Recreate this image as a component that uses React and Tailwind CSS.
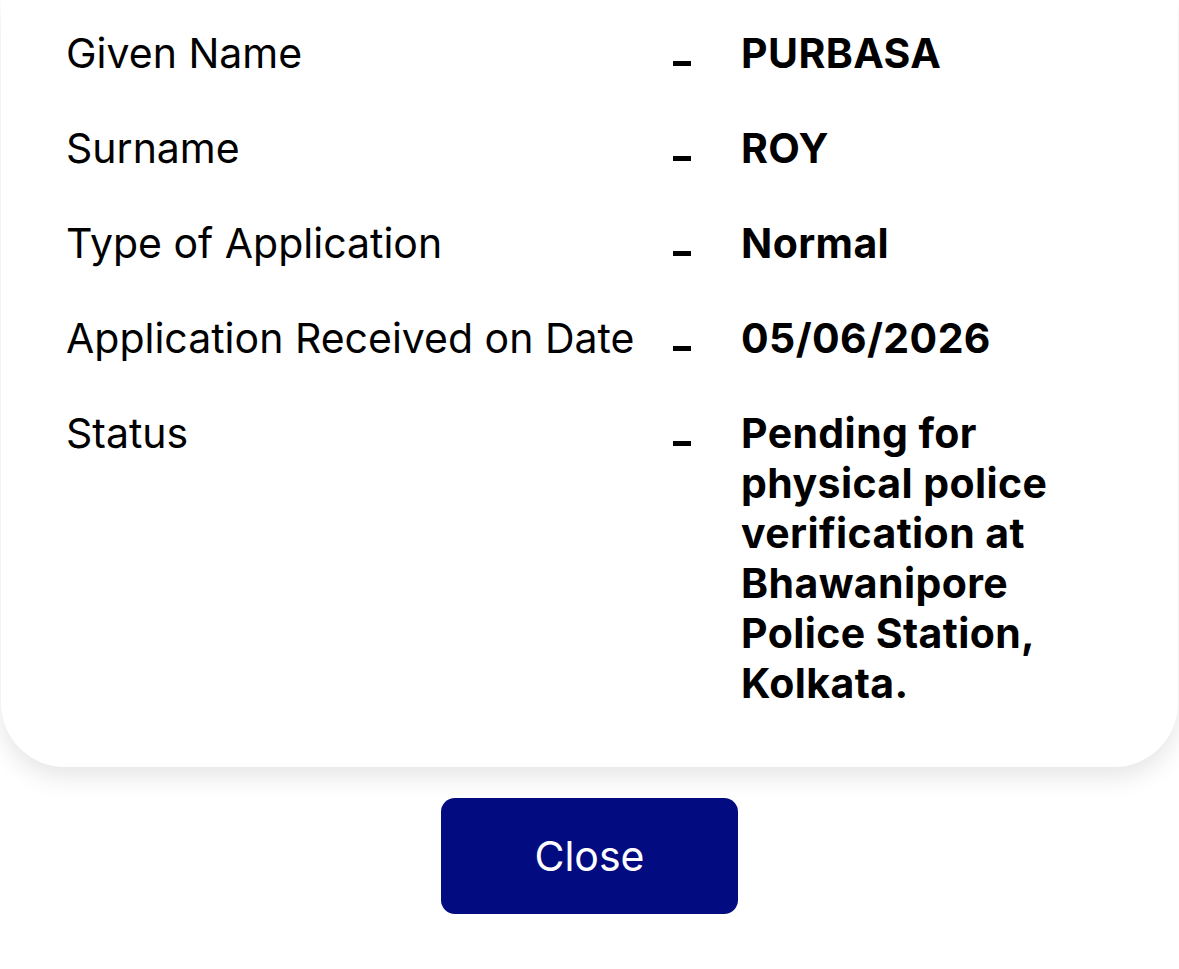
const rows = [
  { label: 'Given Name', value: 'PURBASA' },
  { label: 'Surname', value: 'ROY' },
  { label: 'Type of Application', value: 'Normal' },
  { label: 'Application Received on Date', value: '05/06/2026' },
  {
    label: 'Status',
    value: 'Pending for physical police verification at Bhawanipore Police Station, Kolkata.',
  },
]

function DetailRow({ label, value }) {
  return (
    <div className="flex items-start">
      <div className="w-[607px] shrink-0 text-[41px] leading-[50px] text-black">{label}</div>
      <div className="w-[68px] shrink-0 h-[50px] flex items-end pb-[12px]">
        <div className="w-[18px] h-[5px] bg-black" />
      </div>
      <div className="w-[325px] text-[41px] leading-[50px] font-bold tracking-[0.4px] text-black">{value}</div>
    </div>
  )
}

export default function App() {
  return (
    <div className="min-h-screen bg-white font-['Inter','Liberation_Sans',sans-serif] flex flex-col">
      <div className="mx-[1px] bg-white rounded-b-[64px] shadow-[0_10px_24px_rgba(0,0,0,0.10)] pt-[28px] pb-[59px] pl-[65px] flex flex-col gap-[45px]">
        {rows.map(r => (
          <DetailRow key={r.label} label={r.label} value={r.value} />
        ))}
      </div>
      <div className="flex justify-center pt-[31px]">
        <button className="w-[297px] h-[116px] rounded-[14px] bg-[#020b80] text-white text-[41px] leading-none">
          Close
        </button>
      </div>
    </div>
  )
}
